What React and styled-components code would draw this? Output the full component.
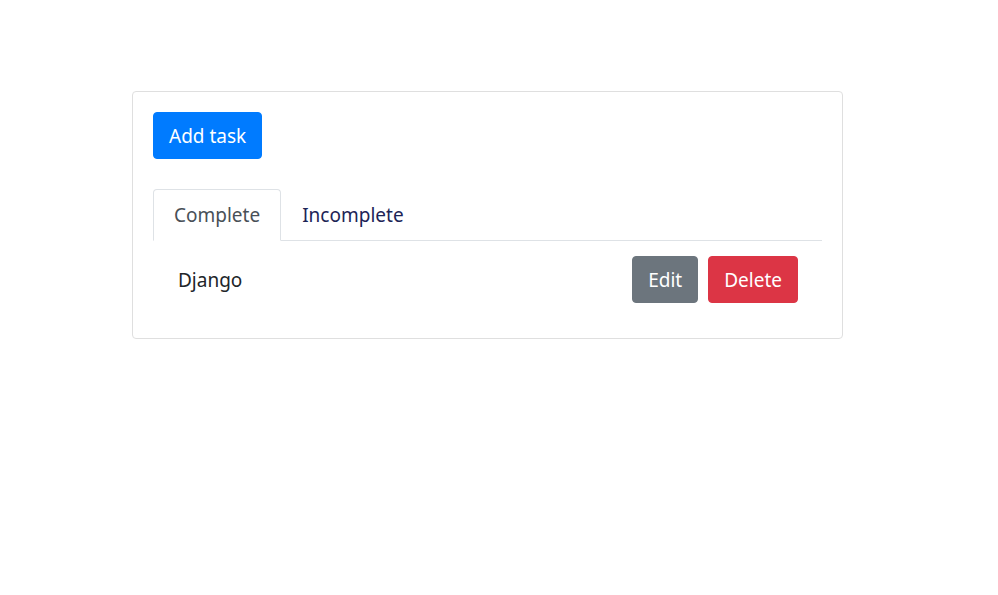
import React, { useState } from "react";
import styled, { createGlobalStyle } from "styled-components";

const GlobalStyle = createGlobalStyle`
  body {
    margin: 0;
    background: #fff;
    font-family: "Segoe UI", "Noto Sans", "Open Sans", sans-serif;
    color: #212529;
  }
`;

const Page = styled.div`
  padding: 91px 0 0 132px;
`;

const Card = styled.div`
  width: 711px;
  box-sizing: border-box;
  border: 1px solid #dfdfdf;
  border-radius: 4px;
  padding: 20px;
  background: #fff;
`;

const Button = styled.button`
  display: block;
  height: 47px;
  font-family: inherit;
  font-size: 19px;
  line-height: 31px;
  padding: 8px 15px 6px;
  border: 1px solid ${(props) => props.bg};
  background: ${(props) => props.bg};
  color: #fff;
  border-radius: 4px;
  cursor: pointer;
`;

const Tabs = styled.div`
  display: flex;
  margin-top: 30px;
  border-bottom: 1px solid #dee2e6;
`;

const Tab = styled.div`
  font-size: 19px;
  line-height: 30px;
  padding: 10px 20px;
  margin-bottom: -1px;
  border: 1px solid ${(props) => (props.active ? "#dee2e6" : "transparent")};
  border-bottom-color: ${(props) => (props.active ? "#fff" : "transparent")};
  border-radius: 4px 4px 0 0;
  background: ${(props) => (props.active ? "#fff" : "transparent")};
  color: ${(props) => (props.active ? "#495057" : "#1d2456")};
  cursor: pointer;
`;

const Row = styled.div`
  display: flex;
  align-items: center;
  padding: 15px 24px 15px 25px;
`;

const Name = styled.span`
  flex: 1;
  font-size: 19px;
`;

const Actions = styled.div`
  display: flex;
  gap: 10px;
`;

export default function App() {
  const [tab, setTab] = useState("complete");
  return (
    <Page>
      <GlobalStyle />
      <Card>
        <Button bg="#007bff">Add task</Button>
        <Tabs>
          <Tab active={tab === "complete"} onClick={() => setTab("complete")}>
            Complete
          </Tab>
          <Tab active={tab === "incomplete"} onClick={() => setTab("incomplete")}>
            Incomplete
          </Tab>
        </Tabs>
        <Row>
          <Name>Django</Name>
          <Actions>
            <Button bg="#6c757d">Edit</Button>
            <Button bg="#dc3545">Delete</Button>
          </Actions>
        </Row>
      </Card>
    </Page>
  );
}
